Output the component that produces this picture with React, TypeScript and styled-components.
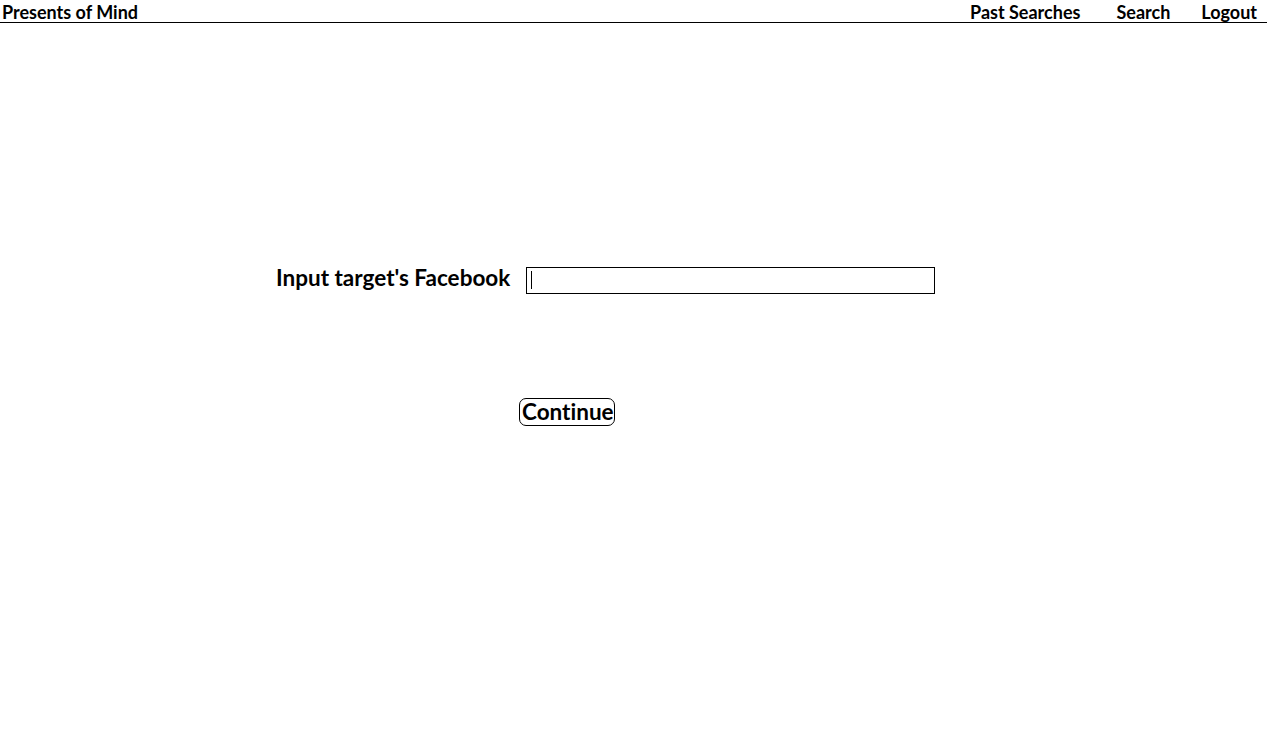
import React from "react";
import styled, { createGlobalStyle } from "styled-components";

const GlobalStyle = createGlobalStyle`
  html, body {
    margin: 0;
    padding: 0;
    background: #fff;
    color: #000;
    font-family: Lato, "Open Sans", sans-serif;
    font-variant-ligatures: none;
  }
`;

const Header = styled.header`
  display: flex;
  align-items: center;
  justify-content: space-between;
  height: 22px;
  border-bottom: 1px solid #000;
  padding: 0 10px 0 2px;
  font-size: 18px;
  font-weight: 700;
`;

const Brand = styled.div`
  line-height: 22px;
  padding-top: 1px;
`;

const Nav = styled.nav`
  display: flex;
  line-height: 22px;
  padding-top: 1px;
`;

const NavLink = styled.a<{ $space?: number }>`
  margin-left: ${(p) => p.$space ?? 0}px;
  color: #000;
  text-decoration: none;
  cursor: pointer;
`;

const Main = styled.main`
  padding-top: 241px;
`;

const FormRow = styled.div`
  display: flex;
  align-items: center;
  gap: 15px;
  margin-left: 276px;
`;

const Label = styled.label`
  width: 235px;
  white-space: nowrap;
  padding-bottom: 5px;
  font-size: 22.5px;
  font-weight: 700;
`;

const Field = styled.div`
  display: flex;
  align-items: center;
  width: 403px;
  height: 25px;
  border: 1px solid #000;
  padding-left: 4px;
`;

const Caret = styled.span`
  width: 1px;
  height: 18px;
  background: #000;
`;

const TextInput = styled.input`
  flex: 1;
  border: 0;
  outline: none;
  height: 100%;
  padding: 0 2px;
  font: 16px Lato, sans-serif;
  background: transparent;
`;

const ButtonRow = styled.div`
  margin-top: 102px;
  margin-left: 519px;
`;

const ContinueButton = styled.button`
  width: 96px;
  height: 28px;
  padding: 0 0 0 2px;
  border: 1px solid #000;
  border-radius: 7px;
  background: #fff;
  color: #000;
  font-family: Lato, sans-serif;
  font-variant-ligatures: none;
  font-size: 22.5px;
  font-weight: 700;
  line-height: 24px;
  text-align: left;
  white-space: nowrap;
  overflow: visible;
  cursor: pointer;
`;

export default function App() {
  return (
    <>
      <GlobalStyle />
      <Header>
        <Brand>Presents of Mind</Brand>
        <Nav>
          <NavLink>Past Searches</NavLink>
          <NavLink $space={36}>Search</NavLink>
          <NavLink $space={31}>Logout</NavLink>
        </Nav>
      </Header>
      <Main>
        <FormRow>
          <Label htmlFor="fb">Input target's Facebook</Label>
          <Field>
            <Caret />
            <TextInput id="fb" />
          </Field>
        </FormRow>
        <ButtonRow>
          <ContinueButton>Continue</ContinueButton>
        </ButtonRow>
      </Main>
    </>
  );
}
